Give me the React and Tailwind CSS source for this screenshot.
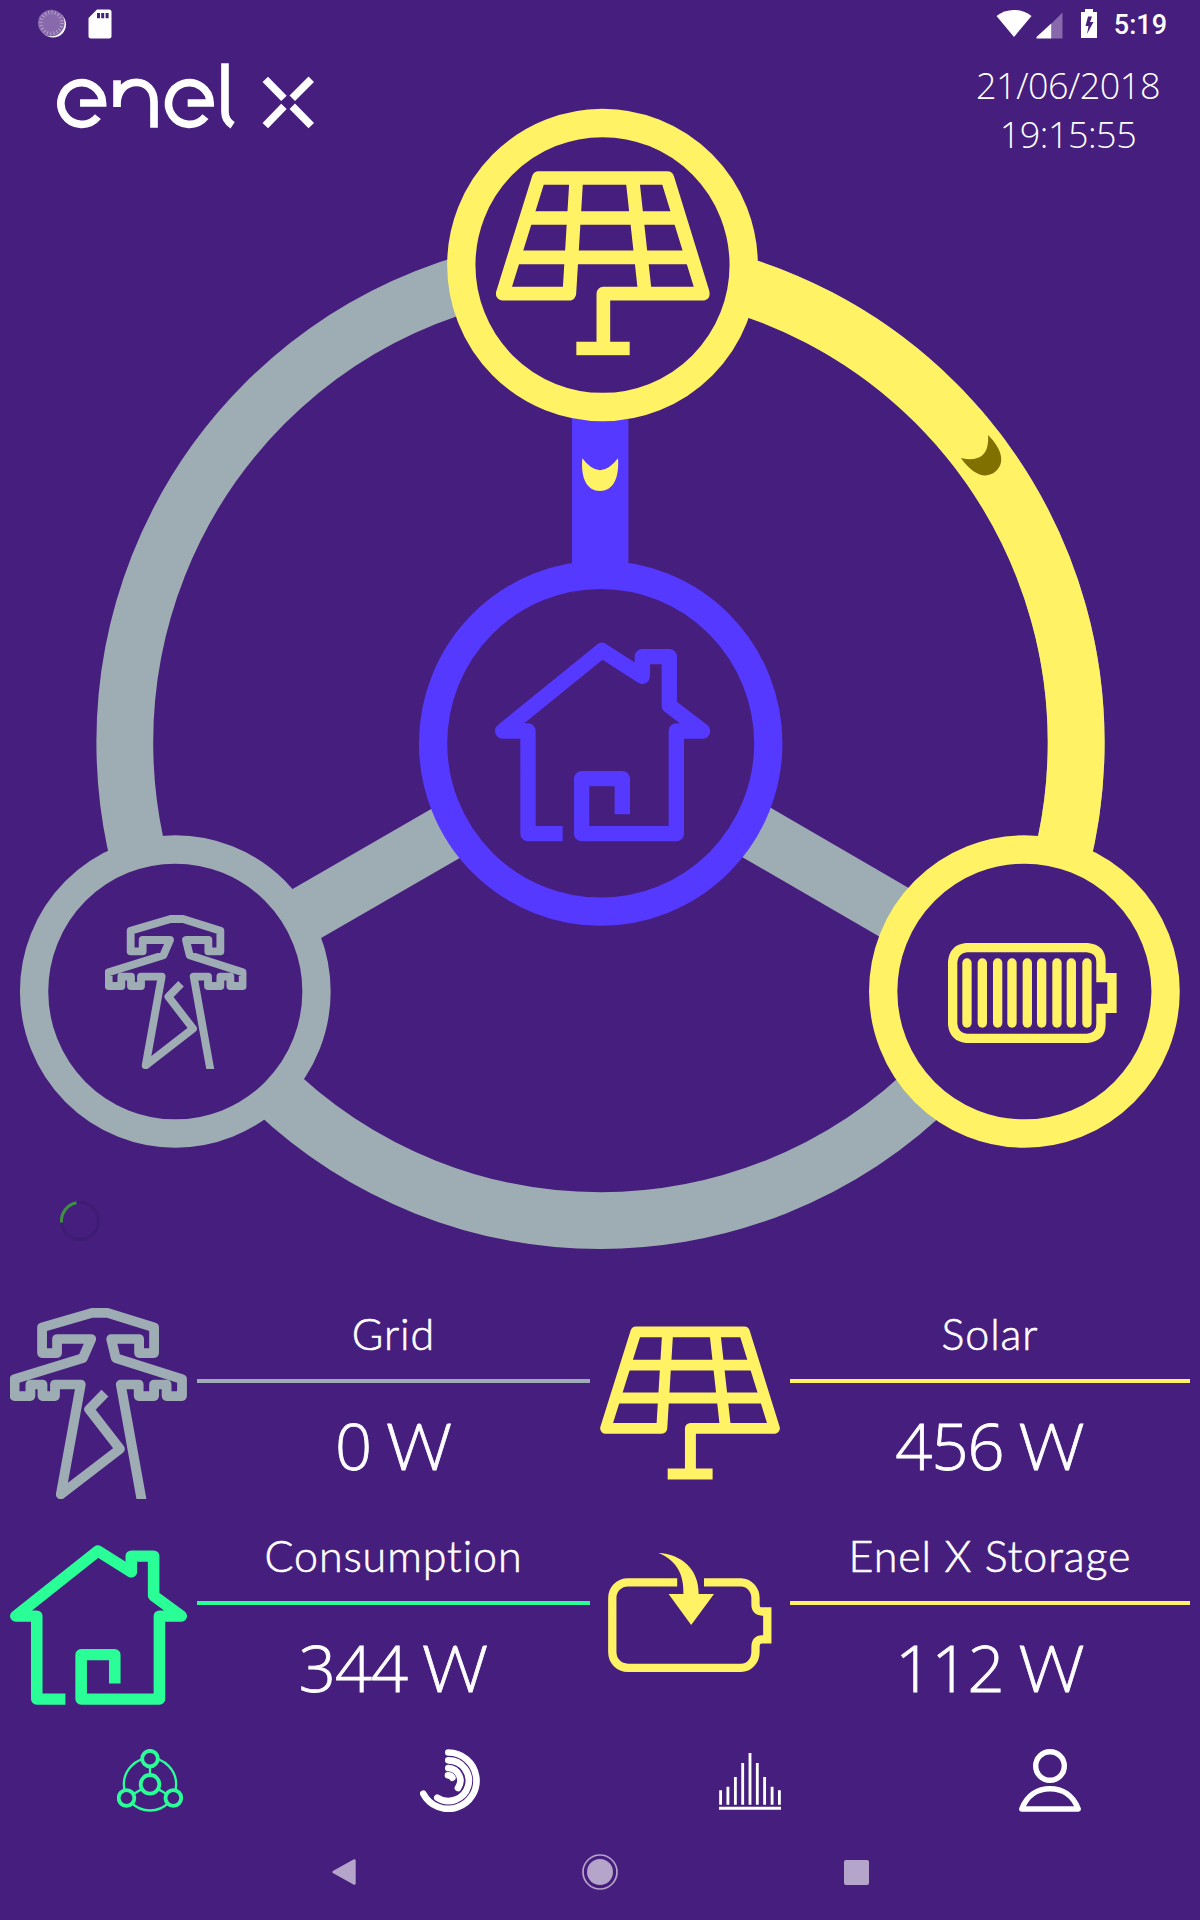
import React from "react";

const readings = [
  {
    label: "Grid",
    amount: "0",
    icon: <TowerIcon className="w-[177px] h-[191px] text-[#9eadb3]" />,
    iconBox: "w-[187px] pl-[10px] pt-[28px]",
    line: "bg-[#9eadb3]",
    body: "ml-[10px] w-[393px]",
  },
  {
    label: "Solar",
    amount: "456",
    icon: <SolarIcon className="w-[180px] h-[154px] text-[#fff265]" stroke={39} />,
    iconBox: "w-[180px] pt-[46px]",
    line: "bg-[#fff265]",
    body: "ml-[10px] w-[400px]",
  },
  {
    label: "Consumption",
    amount: "344",
    icon: (
      <HouseIcon
        className="w-[177px] h-[160px] text-[#2aff97]"
        viewBox="287 309 642 594"
        stroke={42}
      />
    ),
    iconBox: "w-[187px] pl-[10px] pt-[43px]",
    line: "bg-[#2aff97]",
    body: "ml-[10px] w-[393px]",
  },
  {
    label: "Enel X Storage",
    amount: "112",
    icon: <StorageIcon className="w-[164px] h-[120px] text-[#fff265]" />,
    iconBox: "w-[180px] pl-[8px] pt-[51px]",
    line: "bg-[#fff265]",
    body: "ml-[10px] w-[400px]",
  },
];

function SolarIcon({ stroke = 41, ...props }) {
  return (
    <svg
      viewBox="168 213 641 554"
      preserveAspectRatio="none"
      fill="none"
      stroke="currentColor"
      strokeWidth={stroke}
      strokeLinejoin="round"
      {...props}
    >
      <path d="M409 234 L388 581 H188 L296 234 H682 L789 581 H490 V745" />
      <path d="M577 234 L615 581 M262 354 H714 M226 472 H750" />
      <path d="M409 745.5 H569" />
    </svg>
  );
}

function HouseIcon({ stroke = 46, ...props }) {
  return (
    <svg
      viewBox="285 306 646 600"
      preserveAspectRatio="none"
      fill="none"
      stroke="currentColor"
      strokeWidth={stroke}
      strokeLinejoin="round"
      {...props}
    >
      <path d="M488 881 H384 V573 H308 L606 331 L727 409 V350 H808 V497 L908 573 H829 V881 H545 V716 H667 V823" />
    </svg>
  );
}

function TowerIcon(props) {
  return (
    <svg
      viewBox="315 285 425 462"
      preserveAspectRatio="none"
      fill="none"
      stroke="currentColor"
      strokeWidth="23.5"
      strokeLinejoin="round"
      {...props}
    >
      <path d="M632 755 L581 470 H624 V498 H661 V470 H691 V498 H728 V457 L569 406 L558 360 H625 V394 H661 V332 L549 297 H512 L392 332 V394 H428 V360 H510 L490 406 L326 457 V498 H364 V470 H393 V498 H423 V470 H485 L437 736 L579 626 L505 530 L543 491" />
    </svg>
  );
}

function StorageIcon(props) {
  return (
    <svg viewBox="18 43 164 120" fill="none" {...props}>
      <path
        stroke="currentColor"
        strokeWidth="8.3"
        d="M87.2 72.3 H38 C29 72.3 22.3 79.5 22.3 88 V142 C22.3 151 29 157.8 38 157.8 H151 C159 157.8 165.5 151 165.5 142 V137 Q165.5 129.3 172 129.3 H177.3 V101.5 H172 Q165.5 101.5 165.5 94 V88 C165.5 79.5 159 72.3 151 72.3 H114"
      />
      <path
        fill="currentColor"
        d="M68.5 43 C91 44 109 59 108.6 84 H124 L101.2 115 L78.6 84 H93.4 C94 66 88 51 68.5 43 Z"
      />
    </svg>
  );
}

function EnelLogo() {
  return (
    <svg
      viewBox="165 185 780 202"
      className="w-[260px] h-[67.3px]"
      fill="none"
      stroke="#fff"
      strokeWidth="23"
      aria-label="enel x"
    >
      <path d="M240 308 H307.5 A62.5 62.5 0 1 0 293.5 349" />
      <path d="M351 320 V240 M351 309 C352 272 376 246 409 246 C440 246 462 270 462 305 V382" />
      <path d="M563 308 H630.5 A62.5 62.5 0 1 0 616.5 349" />
      <path d="M675 189 V335 Q675 360 698 375" />
      <path d="M796 237 L852 294 M934 237 L877 294 M796 376 L852 318 M934 376 L877 318" />
    </svg>
  );
}

const StatusBar = () => (
  <div className="h-[48px] shrink-0 flex justify-between pl-[38px] pr-[33px]">
    <div className="flex gap-[22px] pt-[9px]">
      <svg viewBox="0 0 28 29" className="w-7 h-[29px]">
        <circle cx="15" cy="15.5" r="13" fill="#fff" />
        <circle cx="13.3" cy="14" r="13.3" fill="#8869ab" />
        <circle
          cx="13.3"
          cy="14"
          r="10.5"
          fill="none"
          stroke="#b9a8cc"
          strokeWidth="3.5"
          strokeDasharray="0.9 2.4"
        />
      </svg>
      <svg viewBox="0 0 24 30" className="w-6 h-[30px]">
        <path
          fill="#fff"
          fillRule="evenodd"
          d="M9 0.5 H21 Q23.5 0.5 23.5 3 V27 Q23.5 29.5 21 29.5 H3 Q0.5 29.5 0.5 27 V9 Z M9 4 V9.3 H12 V4 Z M13.2 4 V9.3 H16.2 V4 Z M17.6 4 V9.3 H20.6 V4 Z"
        />
      </svg>
    </div>
    <div className="flex pt-[9px]">
      <svg viewBox="0 0 36 28" className="w-9 h-7">
        <path fill="#fff" d="M0.5 7 C10 -1 25 -1 35.5 7 L18 28 Z" />
      </svg>
      <svg viewBox="0 0 27 27" className="w-[27px] h-[27px] mt-[2.5px] ml-[4px]">
        <path fill="#8869ab" d="M26.5 0.5 V26.5 H15 V12 Z" />
        <path fill="#fff" d="M15.2 11.5 V26.5 H0.5 V25 Z" />
      </svg>
      <svg viewBox="0 0 16 29" className="w-4 h-[29px] ml-[18px]">
        <path
          fill="#fff"
          fillRule="evenodd"
          d="M4 0 H12 V3 H16 V29 H0 V3 H4 Z M7 7.5 L4.5 17 H7.5 L6 25 L12.5 13 H9 L11 7.5 Z"
        />
      </svg>
      <span className="ml-[17px] -mt-px font-['Roboto'] font-medium text-[27px] leading-[34px] text-white">
        5:19
      </span>
    </div>
  </div>
);

const bars = [351, 397, 443, 486, 532, 575, 621, 664, 711];

const EnergyFlow = () => (
  <svg viewBox="0 100 1200 1180" className="w-[1200px] h-[1180px] -mt-[60px] shrink-0">
    {/* outer ring and spokes */}
    <g fill="none" stroke="#9eadb3" strokeWidth="56.8">
      <ellipse cx="600.5" cy="742.3" rx="475.7" ry="478.3" />
      <path d="M600.5 744 L175.3 989.5 M600.5 742 L1024.5 988" />
    </g>
    <path
      d="M602 264 A475.7 478.3 0 0 1 1024.4 959.3"
      fill="none"
      stroke="#fff265"
      strokeWidth="56.8"
    />
    <path d="M572 400 H628.4 V600 H572 Z" fill="#5539ff" />

    {/* nodes */}
    <g fill="#461e7d" strokeWidth="28.3">
      <ellipse cx="602.5" cy="265" rx="141.2" ry="142" stroke="#fff265" />
      <ellipse cx="600.7" cy="743.3" rx="167.6" ry="168.4" stroke="#5539ff" />
      <ellipse cx="175.3" cy="991.5" rx="141.2" ry="142" stroke="#9eadb3" />
      <ellipse cx="1024.4" cy="991.5" rx="141.2" ry="142" stroke="#fff265" />
    </g>

    <SolarIcon x="496" y="171" width="213.7" height="184.7" color="#fff265" />
    <HouseIcon x="495" y="642" width="215.3" height="200" color="#5539ff" />
    <TowerIcon x="105" y="915" width="141.7" height="154" color="#9eadb3" />

    {/* battery */}
    <g transform="translate(850 820) scale(0.3333)" fill="none" stroke="#fff265" strokeWidth="28">
      <path d="M349 383 H712 Q753 387 753 425 V473 H786 V565 H753 V613 Q753 651 712 655 H349 Q312 651 308 613 V425 Q312 387 349 383 Z" />
      {bars.map((x) => (
        <path key={x} d={`M${x} 429 V609`} strokeLinecap="round" />
      ))}
    </g>

    {/* flow markers */}
    <path
      fill="#fff265"
      d="M582.3 458.3 Q600 482 618 458.3 C619.5 480 612 491 600 491 C588 491 580.5 480 582.3 458.3 Z"
    />
    <path
      fill="#807000"
      transform="translate(974.5 446.5) rotate(-40)"
      d="M-17.8 0 Q0 23.7 17.8 0 C19.5 21.7 12 32.7 0 32.7 C-12 32.7 -19.5 21.7 -17.8 0 Z"
    />

    {/* spinner */}
    <g fill="none" strokeWidth="3">
      <circle cx="80" cy="1221" r="18.5" stroke="#3f1c74" />
      <path d="M61.5 1222.5 A18.5 18.5 0 0 1 76.5 1202.8" stroke="#3f8f45" />
    </g>
  </svg>
);

const TabBar = () => (
  <nav className="h-[112px] shrink-0 grid grid-cols-4 justify-items-center pt-[24px]">
    <svg viewBox="111 57 198 189" className="w-[66px] h-[63px]" fill="#461e7d" stroke="#2aff97">
      <circle cx="210" cy="163" r="78.5" strokeWidth="7" />
      <path d="M210 86 V163 L140 204 M210 163 L280 204" strokeWidth="7" />
      <g strokeWidth="11.5">
        <circle cx="210" cy="86" r="23.5" />
        <circle cx="210" cy="163" r="28" />
        <circle cx="139.5" cy="204" r="23.5" />
        <circle cx="280" cy="204" r="23.5" />
      </g>
    </svg>
    <svg
      viewBox="1020 57 180 189"
      className="w-[60px] h-[63px]"
      fill="none"
      stroke="#fff"
      strokeWidth="20"
      strokeLinecap="round"
    >
      <path d="M1105 67.5 A84.5 84.5 0 1 1 1030 191" />
      <path d="M1105 91 A61 61 0 1 1 1072 203" />
      <path d="M1105 114 A38 38 0 0 1 1134 174" />
      <path d="M1104 136 Q1113 136 1117 143" />
    </svg>
    <svg
      viewBox="445 66 174 171"
      preserveAspectRatio="none"
      className="w-[62px] h-[57px] mt-[4px]"
      fill="none"
      stroke="#fff"
    >
      <path
        strokeWidth="8"
        d="M449.5 178 V221 M470 167 V221 M491 138 V221 M511.5 96 V221 M532 66 V221 M552.5 96 V221 M573 138 V221 M594 167 V221 M614.5 178 V221"
      />
      <path strokeWidth="9" d="M445 232 H619" />
    </svg>
    <svg
      viewBox="0 0 62 63"
      className="w-[62px] h-[63px]"
      fill="none"
      stroke="#fff"
      strokeWidth="5.4"
      strokeLinejoin="round"
    >
      <circle cx="31" cy="17" r="14.3" />
      <path d="M2.8 60 C8 46 19 39.7 31 39.7 C43 39.7 54 46 59.2 60 Z" />
    </svg>
  </nav>
);

const SystemNav = () => (
  <div className="flex items-center justify-center gap-[226px] h-[70px] shrink-0">
    <svg viewBox="0 0 24 26" className="w-6 h-[26px]">
      <path
        fill="#b5a5cb"
        stroke="#b5a5cb"
        strokeWidth="3"
        strokeLinejoin="round"
        d="M2 13 L22.2 1.8 V24.2 Z"
      />
    </svg>
    <svg viewBox="0 0 36 36" className="w-9 h-9">
      <circle cx="18" cy="18" r="17" fill="none" stroke="#b5a5cb" strokeWidth="1.7" />
      <circle cx="18" cy="18" r="13" fill="#b5a5cb" />
    </svg>
    <div className="w-[25px] h-[25px] rounded-[2px] bg-[#b5a5cb]" />
  </div>
);

const App = () => {
  return (
    <div className="w-[1200px] h-[1920px] overflow-hidden flex flex-col bg-[#461e7d] text-white font-['Lato','Open_Sans',sans-serif]">
      <StatusBar />

      <header className="h-[112px] shrink-0 flex justify-between pl-[55px] pr-[40px] pt-[14px]">
        <EnelLogo />
        <div className="w-[184px] flex flex-col items-center whitespace-nowrap font-['Open_Sans',sans-serif] font-light text-[36px] leading-[49px] -mt-px">
          <span className="tracking-[-0.5px]">21/06/2018</span>
          <span className="tracking-[-0.5px]">19:15:55</span>
        </div>
      </header>

      <EnergyFlow />

      <main className="grid grid-cols-2 auto-rows-[222px] shrink-0 h-[445px]">
        {readings.map((item) => (
          <section key={item.label} className="flex">
            <div className={`shrink-0 ${item.iconBox}`}>{item.icon}</div>
            <div className={`flex flex-col items-center whitespace-nowrap ${item.body}`}>
              <h2 className="h-[99px] pt-[26px] text-[43px] leading-[56px] font-light tracking-[0.9px] [-webkit-text-stroke:0.6px_#fff]">
                {item.label}
              </h2>
              <div className={`h-[4px] w-full shrink-0 ${item.line}`} />
              <p className="flex items-baseline gap-[15px] pt-[22px] text-[65px] leading-[80px] font-light [-webkit-text-stroke:0.8px_#fff]">
                <span className="font-['Open_Sans',sans-serif] tracking-[-1px]">
                  {item.amount}
                </span>
                <span>W</span>
              </p>
            </div>
          </section>
        ))}
      </main>

      <TabBar />
      <SystemNav />
    </div>
  );
};

export default App;
